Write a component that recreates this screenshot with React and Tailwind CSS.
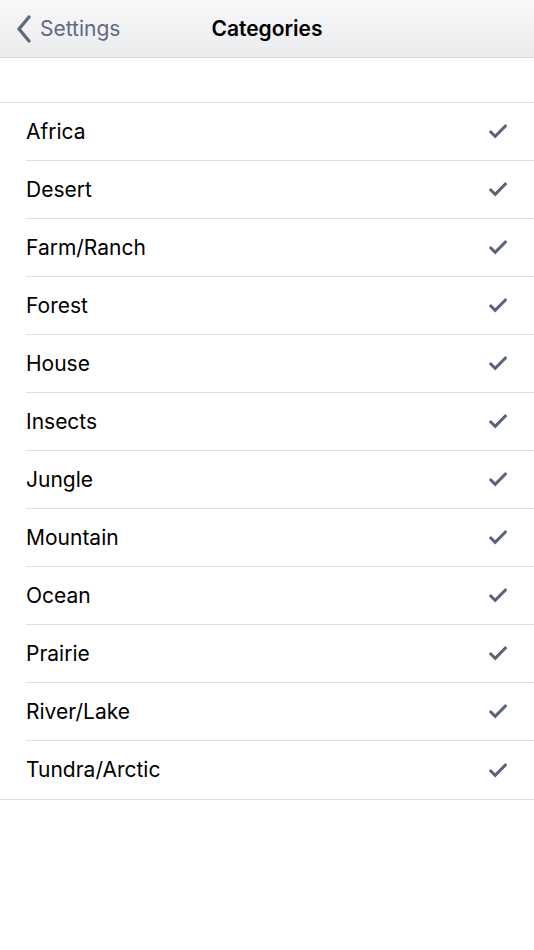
import React from "react";

const categories = [
  "Africa",
  "Desert",
  "Farm/Ranch",
  "Forest",
  "House",
  "Insects",
  "Jungle",
  "Mountain",
  "Ocean",
  "Prairie",
  "River/Lake",
  "Tundra/Arctic",
];

const Check = () => (
  <svg width="18" height="15" viewBox="0 0 18 15" fill="none">
    <path
      d="M1.8 8 L6.2 12.3 L16.3 2.2"
      stroke="#59637a"
      strokeWidth="3"
      strokeLinecap="square"
    />
  </svg>
);

const App = () => {
  return (
    <div
      className="w-[534px] min-h-[950px] bg-white"
      style={{ fontFamily: "Inter, 'Liberation Sans', sans-serif" }}
    >
      <nav className="h-[58px] flex items-center relative bg-gradient-to-b from-[#f8f8f9] to-[#ebecee] border-b border-[#d9d9dc]">
        <div className="flex items-center pl-[15px] gap-[7px] text-[#5f6a7e]">
          <svg width="18" height="30" viewBox="0 0 18 30" fill="none">
            <path
              d="M14 3 L4 15 L14 27"
              stroke="#5f6a7e"
              strokeWidth="3.4"
              strokeLinecap="round"
              strokeLinejoin="round"
            />
          </svg>
          <span className="text-[21px]">Settings</span>
        </div>
        <div className="absolute left-0 right-0 text-center text-[21px] font-semibold text-black pointer-events-none">
          Categories
        </div>
      </nav>

      <div className="h-[44px]" />

      <ul className="border-y border-[#e0e0e2]">
        {categories.map((name, i) => (
          <li key={name} className="pl-[26px]">
            <div
              className={
                "h-[58px] flex items-center justify-between pr-[27px] " +
                (i < categories.length - 1 ? "border-b border-[#e0e0e2]" : "")
              }
            >
              <span className="text-[21px] text-black">{name}</span>
              <Check />
            </div>
          </li>
        ))}
      </ul>
    </div>
  );
};

export default App;
